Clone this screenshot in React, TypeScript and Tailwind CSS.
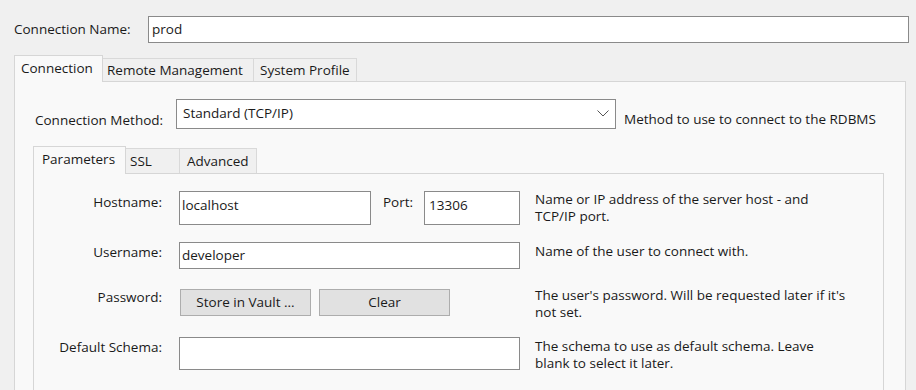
import React from "react";

const font = { fontFamily: '"Open Sans", "Noto Sans", sans-serif' };

function Chevron() {
  return (
    <svg width="12" height="7" viewBox="0 0 12 7" fill="none">
      <path d="M0.5 0.5 L6 6 L11.5 0.5" stroke="#555" strokeWidth="1" />
    </svg>
  );
}

export default function App() {
  return (
    <div
      className="w-[916px] h-[390px] overflow-hidden bg-[#f0f0f0] text-[#1a1a1a] text-[13.5px] leading-[17px]"
      style={font}
    >
      {/* Connection Name */}
      <div className="flex items-center pt-[16px] pl-[14px]">
        <div className="w-[134px]">Connection Name:</div>
        <div className="w-[761px] h-[27px] bg-white border border-[#8a8a8a] pl-[3px] flex items-center">
          prod
        </div>
      </div>

      {/* Outer tabs */}
      <div className="ml-[14px] mt-[12px] flex items-end h-[26px] relative z-10">
        <div className="w-[89px] h-[27px] bg-[#f9f9f9] border border-[#d6d6d6] border-b-0 pl-[6px] pt-[4px] -mb-px">
          Connection
        </div>
        <div className="w-[151px] h-[23px] bg-[#f0f0f0] border border-[#d9d9d9] border-l-0 border-b-0 pl-[4px] pt-[3px]">
          Remote Management
        </div>
        <div className="w-[103px] h-[23px] bg-[#f0f0f0] border border-[#d9d9d9] border-l-0 border-b-0 pl-[6px] pt-[3px]">
          System Profile
        </div>
      </div>

      {/* Outer panel */}
      <div className="ml-[14px] w-[892px] h-[320px] bg-[#f9f9f9] border border-[#d6d6d6]">
        {/* Connection Method */}
        <div className="flex items-start pt-[17px] pl-[20px]">
          <div className="w-[141px] pt-[13px]">Connection Method:</div>
          <div className="w-[440px] h-[30px] bg-white border border-[#8a8a8a] flex items-center justify-between pl-[6px] pr-[6px] pb-[1px]">
            <span>Standard (TCP/IP)</span>
            <Chevron />
          </div>
          <div className="ml-[8px] pt-[12px]">Method to use to connect to the RDBMS</div>
        </div>

        {/* Inner tabs */}
        <div className="ml-[18px] mt-[18px] flex items-end h-[26px] relative z-10">
          <div className="w-[93px] h-[28px] bg-[#f9f9f9] border border-[#d6d6d6] border-b-0 pl-[8px] pt-[4px] -mb-px">
            Parameters
          </div>
          <div className="w-[54px] h-[25px] bg-[#f0f0f0] border border-[#d9d9d9] border-l-0 border-b-0 pl-[4px] pt-[4px]">
            SSL
          </div>
          <div className="w-[77px] h-[25px] bg-[#f0f0f0] border border-[#d9d9d9] border-l-0 border-b-0 pl-[7px] pt-[4px]">
            Advanced
          </div>
        </div>

        {/* Inner panel */}
        <div className="ml-[18px] w-[851px] h-[220px] bg-[#f9f9f9] border border-[#d6d6d6] pt-[17px]">
          <div className="flex flex-col">
            {/* Hostname */}
            <div className="flex items-start h-[34px]">
              <div className="w-[128px] text-right pt-[3px]">Hostname:</div>
              <div className="ml-[17px] w-[192px] h-[34px] bg-white border border-[#8a8a8a] pl-[2px] pt-[5px]">
                localhost
              </div>
              <div className="ml-[12px] w-[41px] pt-[3px]">Port:</div>
              <div className="w-[96px] h-[34px] bg-white border border-[#8a8a8a] pl-[4px] pt-[5px]">
                13306
              </div>
              <div className="ml-[15px] w-[300px]">
                Name or IP address of the server host - and TCP/IP port.
              </div>
            </div>

            {/* Username */}
            <div className="flex items-start h-[27px] mt-[17px]">
              <div className="w-[128px] text-right pt-[2px]">Username:</div>
              <div className="ml-[17px] w-[341px] h-[27px] bg-white border border-[#8a8a8a] pl-[2px] pt-[4px]">
                developer
              </div>
              <div className="ml-[15px] pt-[1px]">Name of the user to connect with.</div>
            </div>

            {/* Password */}
            <div className="flex items-start h-[27px] mt-[20px]">
              <div className="w-[128px] text-right">Password:</div>
              <button className="ml-[18px] w-[131px] h-[27px] bg-[#e1e1e1] border border-[#adadad] flex items-center justify-center">
                Store in Vault ...
              </button>
              <button className="ml-[8px] w-[131px] h-[27px] bg-[#e1e1e1] border border-[#adadad] flex items-center justify-center">
                Clear
              </button>
              <div className="ml-[85px] w-[330px] -mt-[2px]">
                The user's password. Will be requested later if it's not set.
              </div>
            </div>

            {/* Default Schema */}
            <div className="flex items-start h-[33px] mt-[21px]">
              <div className="w-[128px] text-right pt-[2px]">Default Schema:</div>
              <div className="ml-[17px] w-[341px] h-[33px] bg-white border border-[#8a8a8a]" />
              <div className="ml-[15px] w-[300px] pt-[1px]">
                The schema to use as default schema. Leave blank to select it later.
              </div>
            </div>
          </div>
        </div>
      </div>
    </div>
  );
}
